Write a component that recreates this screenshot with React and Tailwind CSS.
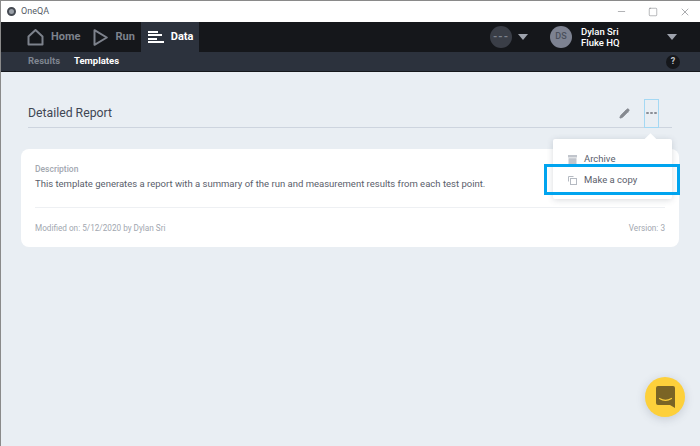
import React from 'react';
import { Pencil, Minus, Square, X } from 'lucide-react';

const Caret = () => (
  <div className="w-0 h-0 border-x-[5.5px] border-x-transparent border-t-[6px] border-t-[#9ea3ad]" />
);

const App = () => {
  return (
    <div
      className="relative w-[700px] h-[446px] overflow-hidden flex flex-col bg-[#e9eef3] border-l border-t border-[#8a8a8a]"
      style={{ fontFamily: 'Roboto, sans-serif' }}
    >
      {/* title bar */}
      <div className="h-[21px] shrink-0 bg-white flex items-center pl-[6px] text-[#3a3f4a]">
        <div className="w-[9px] h-[9px] rounded-full border-[2px] border-[#454a52] bg-[#9aa0a8]" />
        <span className="ml-[5px] text-[9px] text-[#555b66]">OneQA</span>
        <div className="ml-auto flex items-center text-[#55585e]">
          <Minus size={11} strokeWidth={1} />
          <Square size={10} strokeWidth={1} className="ml-[21px]" />
          <X size={12} strokeWidth={1} className="ml-[21px] mr-[9px]" />
        </div>
      </div>

      {/* main nav */}
      <div className="h-[30px] shrink-0 bg-[#15171b] flex items-stretch pl-[26px] text-[11px] font-bold">
        <div className="flex items-center text-[#7d828c]">
          <svg width="17" height="17" viewBox="0 0 17 17" fill="none" stroke="#7d828c" strokeWidth="2" strokeLinejoin="round">
            <path d="M1.5 7.5 8.5 1l7 6.5v8h-14z" />
          </svg>
          <span className="ml-[7px]">Home</span>
        </div>
        <div className="flex items-center ml-[13px] text-[#7d828c]">
          <svg width="15" height="17" viewBox="0 0 15 17" fill="none" stroke="#7d828c" strokeWidth="2" strokeLinejoin="round">
            <path d="M1.5 1.2 13.8 8.5 1.5 15.8z" />
          </svg>
          <span className="ml-[7px]">Run</span>
        </div>
        <div className="flex items-center ml-[6px] w-[58px] pl-[7px] bg-[#2c323d] text-white">
          <div className="flex flex-col gap-[1.5px] w-[16px]">
            <div className="h-[2px] w-[10px] bg-white" />
            <div className="h-[2px] w-[14px] bg-white" />
            <div className="h-[2px] w-[9px] bg-white" />
            <div className="h-[2px] w-[16px] bg-white" />
          </div>
          <span className="ml-[7px]">Data</span>
        </div>
        <div className="ml-auto flex items-center">
          <div className="w-[22px] h-[22px] rounded-full bg-[#3a3e47] flex items-center justify-center text-[#7d828c] text-[11px] tracking-[1px]">
            ---
          </div>
          <div className="ml-[6px]"><Caret /></div>
          <div className="ml-[22px] w-[22px] h-[22px] rounded-full bg-[#7d8291] flex items-center justify-center text-[#4b505c] text-[9px] font-medium">
            DS
          </div>
          <div className="ml-[9px] w-[86px] text-white text-[9.5px] leading-[11px] font-medium">
            <div>Dylan Sri</div>
            <div>Fluke HQ</div>
          </div>
          <div className="mr-[23px]"><Caret /></div>
        </div>
      </div>

      {/* sub nav */}
      <div className="h-[19px] shrink-0 bg-[#2c323d] flex items-center pl-[27px] text-[9.5px] font-bold border-b border-[#15171b] box-content">
        <span className="text-[#7f8590]">Results</span>
        <span className="ml-[14px] text-white">Templates</span>
        <div className="ml-auto mr-[20px] w-[14px] h-[14px] rounded-full bg-[#15171b] flex items-center justify-center text-[#c5c8ce] text-[9px]">
          ?
        </div>
      </div>

      {/* page body */}
      <div className="flex-1 flex flex-col px-[20px] pt-[27px]">
        <div className="mx-[7px] h-[29px] flex items-center border-b border-[#cdd4de] w-[644px]">
          <span className="mt-[1px] text-[12.25px] text-[#3f4653]">Detailed Report</span>
          <Pencil size={11} fill="#85898f" stroke="#85898f" className="ml-auto mr-[14px]" />
          <div className="h-[29px] w-[15px] mr-[13px] border border-[#a4d8f3] flex items-center justify-center gap-[1.5px]">
            <div className="w-[2.5px] h-[2.5px] rounded-full bg-[#8a8e96]" />
            <div className="w-[2.5px] h-[2.5px] rounded-full bg-[#8a8e96]" />
            <div className="w-[2.5px] h-[2.5px] rounded-full bg-[#8a8e96]" />
          </div>
        </div>

        <div className="mt-[21px] w-[658px] h-[98px] bg-white rounded-[8px] px-[14px] pt-[15px]">
          <div className="text-[8.5px] leading-[10px] font-medium text-[#a2a7b0]">Description</div>
          <div className="mt-[3px] text-[9.5px] leading-[14px] text-[#5a606b]">
            This template generates a report with a summary of the run and measurement results from each test point.
          </div>
          <div className="mt-[16px] pt-[15px] border-t border-[#eef0f3] flex justify-between text-[8.2px] leading-[10px] text-[#a2a7b0]">
            <span>Modified on: 5/12/2020 by Dylan Sri</span>
            <span>Version: 3</span>
          </div>
        </div>
      </div>

      {/* dropdown */}
      <div className="absolute left-[552px] top-[138px] w-[119px] h-[60px] bg-white rounded-[2px] shadow-[0_1px_6px_rgba(60,70,90,0.2)] text-[9.5px] text-[#5a606b]">
        <div className="absolute -top-[4px] left-[93px] w-[9px] h-[9px] rotate-45 bg-white" />
        <div className="flex items-center pl-[15px] pt-[14px] h-[27px]">
          <svg width="9" height="9" viewBox="0 0 9 9" fill="#c1c5cc">
            <rect x="0" y="0" width="9" height="2.5" />
            <path d="M.5 3.2h8V9h-8z" />
          </svg>
          <span className="ml-[7px]">Archive</span>
        </div>
        <div className="flex items-center pl-[15px] pt-[6px] h-[23px]">
          <svg width="9" height="9" viewBox="0 0 9 9" fill="none" stroke="#b5bac2" strokeWidth="1">
            <path d="M5.5.5H.5v5" />
            <rect x="2.5" y="2.5" width="6" height="6" />
          </svg>
          <span className="ml-[7px]">Make a copy</span>
        </div>
      </div>

      {/* highlight */}
      <div className="absolute left-[543px] top-[163px] w-[136px] h-[31px] border-[3px] border-[#00a4ef]" />

      {/* chat button */}
      <div className="absolute left-[644px] top-[376px] w-[40px] h-[40px] rounded-full bg-[#fdd03b] shadow-[0_2px_10px_rgba(60,70,90,0.2)] flex items-center justify-center">
        <svg width="19" height="22" viewBox="0 0 19 22">
          <path d="M2 0h15a2 2 0 0 1 2 2v20l-5-3H2a2 2 0 0 1-2-2V2a2 2 0 0 1 2-2z" fill="#7a6425" />
          <path d="M3.5 12.5c3.5 2.2 8.5 2.2 12 0" fill="none" stroke="#fdd03b" strokeWidth="1.2" strokeLinecap="round" />
        </svg>
      </div>
    </div>
  );
};

export default App;
